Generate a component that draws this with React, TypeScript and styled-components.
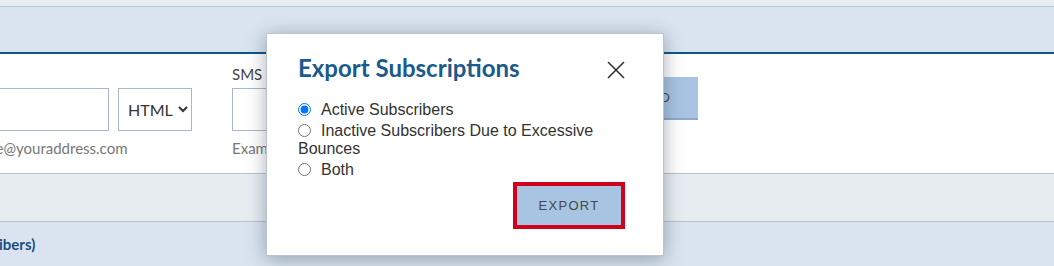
import styled, { createGlobalStyle } from 'styled-components'

const GlobalStyle = createGlobalStyle`
  html, body {
    margin: 0;
    padding: 0;
    background: #ffffff;
    overflow: hidden;
  }
  body {
    font-family: Lato, "Open Sans", sans-serif;
    width: 1054px;
    height: 266px;
  }
`

const Page = styled.div`
  position: relative;
  width: 1054px;
  height: 266px;
  overflow: hidden;
`

const TopStrip = styled.div`
  height: 6px;
  background: #e8edf2;
  border-bottom: 1px solid #b4c3d3;
`

const HeaderBand = styled.div`
  height: 45px;
  background: #dae4f0;
`

const FormPanel = styled.div`
  height: 119px;
  box-sizing: content-box;
  border-top: 2px solid #0e5589;
  border-bottom: 1px solid #b4c3d3;
  background: #ffffff;
  overflow: hidden;
`

const FormRow = styled.div`
  display: flex;
  align-items: flex-start;
  margin-left: -96px;
  padding-top: 12px;
`

const Field = styled.div<{ $width: number; $gap: number }>`
  display: flex;
  flex-direction: column;
  flex: none;
  width: ${p => p.$width}px;
  margin-right: ${p => p.$gap}px;
`

const Label = styled.div`
  height: 17px;
  line-height: 17px;
  font-size: 15px;
  color: #444;
  margin-bottom: 5px;
`

const TextInput = styled.input`
  box-sizing: border-box;
  width: 100%;
  height: 43px;
  border: 1px solid #a9b7c6;
  border-radius: 0;
  background: #fff;
  outline: none;
`

const Select = styled.select`
  box-sizing: border-box;
  width: 100%;
  height: 43px;
  padding: 0 0 0 5px;
  border: 1px solid #a9b7c6;
  border-radius: 0;
  background: #fff;
  font-family: Lato, sans-serif;
  font-size: 16px;
  color: #333;
`

const Helper = styled.div`
  margin-top: 9px;
  height: 17px;
  line-height: 17px;
  font-size: 15px;
  color: #777;
  white-space: nowrap;
`

const Spacer = styled.div`
  height: 22px;
`

const AddButton = styled.button`
  box-sizing: border-box;
  flex: none;
  width: 120px;
  height: 43px;
  margin-top: 11px;
  padding: 0 27px 0 0;
  text-align: right;
  border: none;
  border-bottom: 2px solid #90a9c4;
  background: #a9c4e2;
  font-family: "Liberation Sans", Arial, sans-serif;
  font-size: 13px;
  letter-spacing: 1.2px;
  color: #444;
`

const GreyBand = styled.div`
  height: 47px;
  background: #e8edf2;
  border-bottom: 1px solid #b4c3d3;
`

const SectionBand = styled.div`
  height: 44px;
  background: #dae4f0;
  display: flex;
  align-items: center;
  padding-bottom: 2px;
`

const SectionTitle = styled.div`
  font-family: Lato, sans-serif;
  font-weight: 700;
  font-size: 15px;
  color: #1a4f80;
  margin-left: -1px;
`

const Modal = styled.div`
  position: absolute;
  left: 266px;
  top: 33px;
  width: 398px;
  height: 223px;
  box-sizing: border-box;
  padding: 20px 38px 0 31px;
  background: #ffffff;
  border: 1px solid #b8c4d0;
  box-shadow: 0 3px 18px rgba(40, 55, 75, 0.4);
  display: flex;
  flex-direction: column;
`

const ModalHeader = styled.div`
  display: flex;
  align-items: center;
  justify-content: space-between;
  height: 28px;
`

const ModalTitle = styled.h2`
  margin: 0;
  font-family: Lato, sans-serif;
  font-weight: 700;
  font-size: 24px;
  line-height: 28px;
  color: #1a5a8c;
`

const CloseButton = styled.button`
  display: flex;
  padding: 0;
  border: none;
  background: none;
  margin-top: 4px;
`

const Options = styled.div`
  display: flex;
  flex-direction: column;
  gap: 3px;
  margin-top: 19px;
`

const Option = styled.label`
  display: block;
  font-family: "Liberation Sans", Arial, sans-serif;
  font-size: 16px;
  line-height: 18px;
  color: #333;
`

const Radio = styled.input`
  width: 13px;
  height: 13px;
  margin: 0 10px 0 0;
  vertical-align: -1px;
`

const ModalFooter = styled.div`
  display: flex;
  justify-content: flex-end;
  margin-top: 3px;
`

const ExportButton = styled.button`
  box-sizing: border-box;
  width: 112px;
  height: 47px;
  border: 4px solid #d0021b;
  background: #a7c4e2;
  font-family: "Liberation Sans", Arial, sans-serif;
  font-size: 13px;
  letter-spacing: 1.3px;
  color: #474747;
  padding: 0;
`

const CloseIcon = () => (
  <svg width="18" height="18" viewBox="0 0 18 18">
    <path d="M1 1 L17 17 M17 1 L1 17" stroke="#333" strokeWidth="1.6" fill="none" />
  </svg>
)

const App = () => {
  return (
    <Page>
      <GlobalStyle />
      <TopStrip />
      <HeaderBand />
      <FormPanel>
        <FormRow>
          <Field $width={205} $gap={9}>
            <Spacer />
            <TextInput />
            <Helper>Example: name@youraddress.com</Helper>
          </Field>
          <Field $width={74} $gap={40}>
            <Spacer />
            <Select defaultValue="HTML">
              <option value="HTML">HTML</option>
              <option value="Text">Text</option>
            </Select>
          </Field>
          <Field $width={330} $gap={16}>
            <Label>SMS</Label>
            <TextInput />
            <Helper>Example: 5551234567</Helper>
          </Field>
          <AddButton>ADD</AddButton>
        </FormRow>
      </FormPanel>
      <GreyBand />
      <SectionBand>
        <SectionTitle>ibers)</SectionTitle>
      </SectionBand>

      <Modal>
        <ModalHeader>
          <ModalTitle>Export Subscriptions</ModalTitle>
          <CloseButton aria-label="Close">
            <CloseIcon />
          </CloseButton>
        </ModalHeader>
        <Options>
          <Option>
            <Radio type="radio" name="export" defaultChecked />
            Active Subscribers
          </Option>
          <Option>
            <Radio type="radio" name="export" />
            Inactive Subscribers Due to Excessive Bounces
          </Option>
          <Option>
            <Radio type="radio" name="export" />
            Both
          </Option>
        </Options>
        <ModalFooter>
          <ExportButton>EXPORT</ExportButton>
        </ModalFooter>
      </Modal>
    </Page>
  )
}

export default App
